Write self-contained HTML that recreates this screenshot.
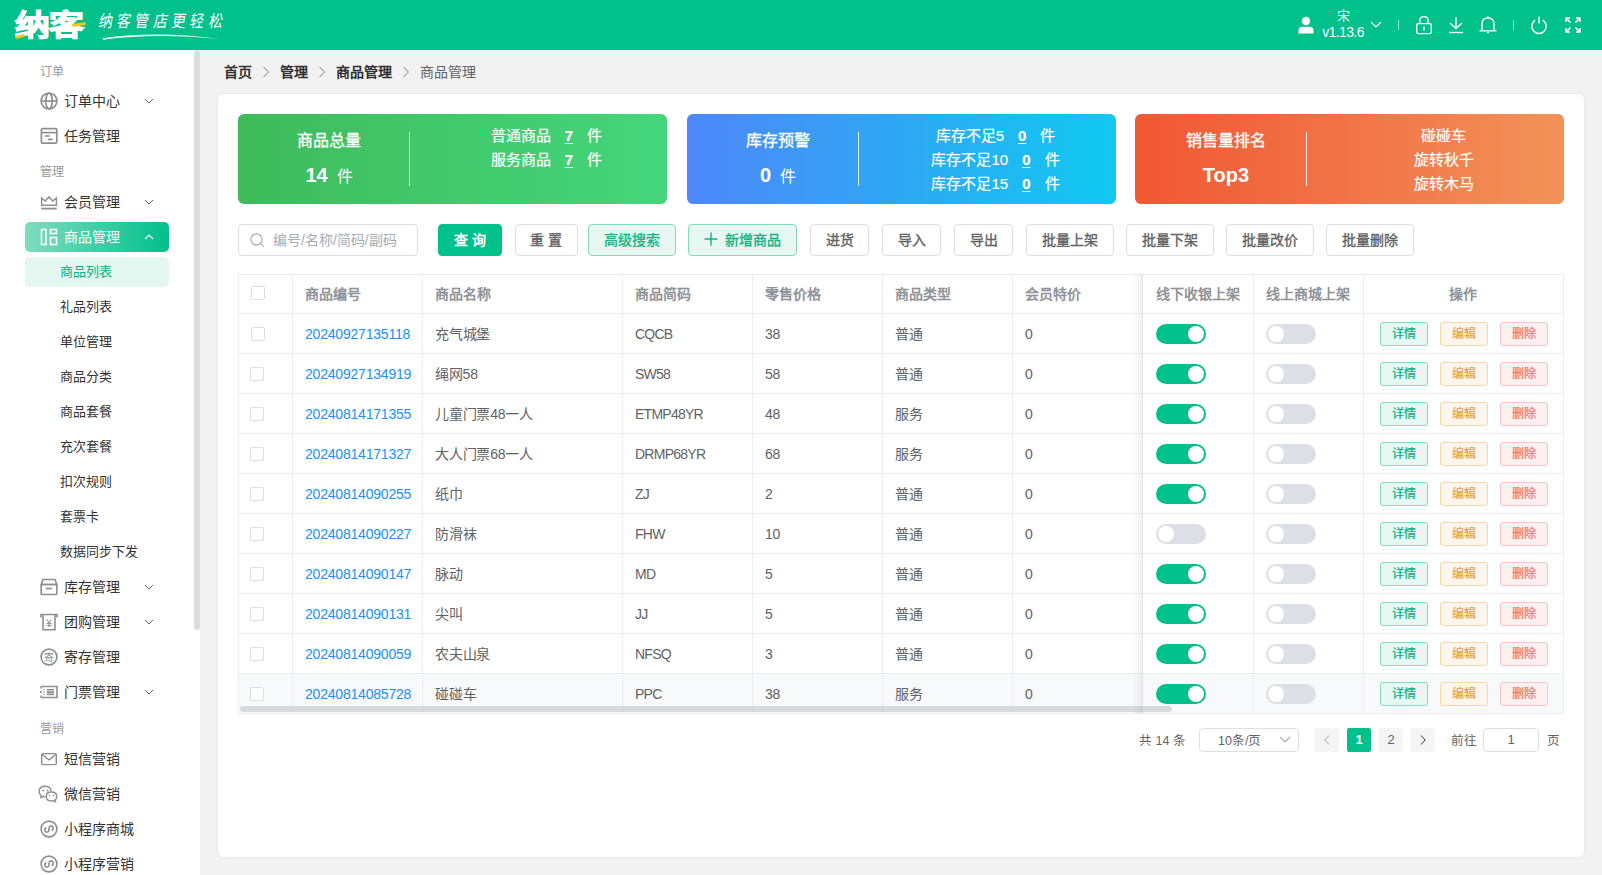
<!DOCTYPE html>
<html lang="zh-CN">
<head>
<meta charset="utf-8">
<style>
*{box-sizing:border-box;margin:0;padding:0}
html,body{width:1602px;height:875px;overflow:hidden;background:#f2f2f2;font-family:"Liberation Sans",sans-serif;color:#303133}
.abs{position:absolute}
#hdr{position:absolute;left:0;top:0;width:1602px;height:50px;background:#00c08b}
#side{position:absolute;left:0;top:50px;width:200px;height:825px;background:#fff;overflow:hidden}
#sbthumb{position:absolute;left:194px;top:50px;width:6px;height:580px;background:#dcdde0;border-radius:3px}
#card{position:absolute;left:218px;top:94px;width:1366px;height:763px;background:#fff;border-radius:6px;box-shadow:0 0 4px rgba(0,0,0,.06)}
.slab{left:40px;font-size:12px;line-height:20px;color:#999}
.sitem{left:64px;font-size:14px;line-height:20px;color:#333}
.sitem.act{color:#fff}
.ssub{left:60px;font-size:13px;line-height:20px;color:#333}
.ssub.act{color:#00b37f}
.sico{width:18px;height:18px;line-height:0}
.bc{font-size:14px;line-height:20px;font-weight:700;color:#303133;white-space:nowrap}
.scard{top:114px;width:429px;height:90px;border-radius:6px}
.stitle{top:131px;width:120px;text-align:center;font-size:16px;line-height:20px;color:#fff;white-space:nowrap;-webkit-text-stroke:.3px #fff}
.snum{top:165px;width:120px;text-align:center;font-size:16px;line-height:20px;color:#fff;white-space:nowrap}
.snum b{font-size:20px;font-weight:700}
.srow{width:300px;text-align:center;font-size:15px;line-height:24px;color:#fff;white-space:nowrap;-webkit-text-stroke:.2px #fff}
.srow u{font-weight:700;margin:0 14px;text-underline-offset:2px}
.inp{border:1px solid #dcdfe6;border-radius:4px;background:#fff}
.sl{display:inline-block;padding:0}
.btn{top:224px;height:32px;border:1px solid #dcdfe6;border-radius:4px;text-align:center;font-size:14px;line-height:30px;font-weight:500;color:#606266;background:#fff;white-space:nowrap}
.btn.pri{background:#00c08b;border-color:#00c08b;color:#fff;font-weight:700}
.btn.def{font-weight:400;-webkit-text-stroke:.35px #606266}
.btn.grn{background:#e6f8f1;border-color:#80dcbc;color:#12b383;font-weight:400;-webkit-text-stroke:.35px #12b383}
.plus{font-weight:400;font-size:20px;margin-right:6px;position:relative;top:1px}
.cb{width:14px;height:14px;border:1px solid #dcdfe6;border-radius:2px;background:#fff}
.th{font-size:14px;line-height:20px;font-weight:700;color:#909399;white-space:nowrap}
.td{font-size:14px;line-height:20px;color:#606266;white-space:nowrap;letter-spacing:-.2px}
.lnk{color:#1890ff}
.sw{width:50px;height:20px;border-radius:10px;background:#dcdfe6}
.sw i{position:absolute;left:2px;top:2px;width:16px;height:16px;border-radius:50%;background:#fff}
.sw.on{background:#00c08b}
.sw.on i{left:32px}
.ab{width:48px;height:24px;border:1px solid;border-radius:3px;font-size:12px;line-height:22px;text-align:center;-webkit-text-stroke:.2px currentColor}
.ab1{background:#e6f8f1;border-color:#80dcbc;color:#00b37f}
.ab2{background:#fdf6ec;border-color:#f5d7a8;color:#e6a23c}
.ab3{background:#fef0f0;border-color:#fbc4c4;color:#f56c6c}
.pg{font-size:12.5px;line-height:20px;color:#606266;white-space:nowrap}
.pb{top:728px;width:24px;height:24px;border-radius:2px;background:#f4f4f5;text-align:center;font-size:13px;line-height:24px;color:#606266;font-weight:400}
.pb svg{margin-top:6px}
.pb.act{background:#00c08b;color:#fff;font-weight:700}
</style>
</head>
<body>
<div id="hdr">
 <div class="abs" style="left:15px;top:6px;font-size:29px;font-weight:900;color:#fff;letter-spacing:-1px;line-height:40px;-webkit-text-stroke:1.2px #fff;white-space:nowrap;transform:scaleX(1.2);transform-origin:0 0">纳客</div>
 <div class="abs" style="left:15px;top:35px;width:10px;height:3px;background:#f5c518;border-radius:2px;transform:rotate(-15deg)"></div>
 <div class="abs" style="left:72px;top:23px;width:14px;height:3px;background:#f5c518;border-radius:2px;transform:rotate(-8deg)"></div>
 <div class="abs" style="left:101px;top:9px;font-size:14px;color:#fff;font-family:'Liberation Serif',serif;font-weight:200;letter-spacing:4.3px;line-height:22px;white-space:nowrap;transform:skewX(-10deg) scaleY(1.2);transform-origin:0 0">纳客管店更轻松</div>
 <svg class="abs" style="left:100px;top:30px" width="125" height="12" viewBox="0 0 125 12"><path d="M2.5 8.2 Q55 0.5 120 9 Q55 2.8 3.5 9.8 Z" fill="#fff" opacity=".92"/></svg>
 <svg class="abs" style="left:1298px;top:16px" width="16" height="18" viewBox="0 0 16 18"><circle cx="8" cy="5" r="4.2" fill="#fff"/><path d="M0.5 17.5 V14.5 Q0.5 10.8 4.5 10.8 H11.5 Q15.5 10.8 15.5 14.5 V17.5 Z" fill="#fff"/></svg>
 <div class="abs" style="left:1321px;top:7px;width:44px;text-align:center;color:#fff;font-size:13px;line-height:17px">宋</div>
 <div class="abs" style="left:1318px;top:24px;width:50px;text-align:center;color:#fff;font-size:14px;line-height:17px;letter-spacing:-.6px">v1.13.6</div>
 <svg class="abs" style="left:1370px;top:20px" width="12" height="9"><path d="M1 2 L6 7 L11 2" stroke="#fff" stroke-width="1.2" fill="none"/></svg>
 <div class="abs" style="left:1398px;top:20px;width:1px;height:10px;background:rgba(255,255,255,.6)"></div>
 <svg class="abs" style="left:1415px;top:15px" width="18" height="20" viewBox="0 0 18 20"><rect x="1.7" y="8.6" width="14.6" height="10" rx="1.5" stroke="#fff" stroke-width="1.4" fill="none"/><path d="M4.8 8.6 V5.6 Q4.8 1.6 9 1.6 Q13.2 1.6 13.2 5.6 V8.6" stroke="#fff" stroke-width="1.4" fill="none"/><path d="M9 11.5 V15.5" stroke="#fff" stroke-width="1.4"/></svg>
 <svg class="abs" style="left:1448px;top:16px" width="16" height="18" viewBox="0 0 16 18"><path d="M8 1 V12 M2 7 L8 12.5 L14 7" stroke="#fff" stroke-width="1.4" fill="none"/><path d="M1 16.5 H15" stroke="#fff" stroke-width="1.4"/></svg>
 <svg class="abs" style="left:1478px;top:15px" width="20" height="20" viewBox="0 0 20 20"><path d="M4 15.5 V9 Q4 3 10 3 Q16 3 16 9 V15.5" stroke="#fff" stroke-width="1.4" fill="none"/><path d="M1.5 15.8 H18.5" stroke="#fff" stroke-width="1.4"/><circle cx="10" cy="2.2" r="1" fill="#fff"/><path d="M9 17.5 H11" stroke="#fff" stroke-width="1.4"/></svg>
 <div class="abs" style="left:1513px;top:20px;width:1px;height:10px;background:rgba(255,255,255,.6)"></div>
 <svg class="abs" style="left:1530px;top:15px" width="18" height="20" viewBox="0 0 18 20"><path d="M5.2 5.2 A7.2 7.2 0 1 0 12.8 5.2" stroke="#fff" stroke-width="1.4" fill="none"/><path d="M9 1.5 V8.5" stroke="#fff" stroke-width="1.4"/></svg>
 <svg class="abs" style="left:1564px;top:16px" width="18" height="18" viewBox="0 0 18 18"><g stroke="#fff" stroke-width="1.5" fill="none"><path d="M2 6 V2 H6 M2 2 L6.5 6.5"/><path d="M16 6 V2 H12 M16 2 L11.5 6.5"/><path d="M2 12 V16 H6 M2 16 L6.5 11.5"/><path d="M16 12 V16 H12 M16 16 L11.5 11.5"/></g></svg>
</div>
<div id="side"></div>
<div class="abs slab" style="top:61.5px">订单</div>
<div class="abs sico" style="left:40px;top:91.5px"><svg width="18" height="18" viewBox="0 0 18 18"><g stroke="#8f8f8f" stroke-width="1.7" fill="none"><circle cx="9" cy="9" r="7.9"/><ellipse cx="9" cy="9" rx="3.2" ry="7.9"/><path d="M1.2 9 H16.8"/></g></svg></div>
<div class="abs sitem" style="top:90.5px">订单中心</div>
<div class="abs" style="left:144px;top:97.5px;width:10px;height:6px;line-height:0"><svg width="10" height="6" viewBox="0 0 10 6"><path d="M1 1 L5 5 L9 1" stroke="#606266" stroke-width="1" fill="none"/></svg></div>
<div class="abs sico" style="left:40px;top:126.5px"><svg width="18" height="18" viewBox="0 0 18 18"><g stroke="#8f8f8f" stroke-width="1.7" fill="none"><rect x="1.4" y="1.6" width="15.4" height="14.6" rx="1.2"/><path d="M1.4 5.6 H16.8"/><path d="M4.8 9 H9.8 M7.8 12.3 H12.8"/></g></svg></div>
<div class="abs sitem" style="top:125.5px">任务管理</div>
<div class="abs slab" style="top:161.5px">管理</div>
<div class="abs sico" style="left:40px;top:192.5px"><svg width="18" height="18" viewBox="0 0 18 18"><g stroke="#8f8f8f" stroke-width="1.7" fill="none"><path d="M1.6 12.3 V5 L5.2 8 L9 3.9 L12.8 8 L16.4 5 V12.3 Z" stroke-width="1.4"/><path d="M1.3 15.6 H16.7" stroke-width="1.8"/></g></svg></div>
<div class="abs sitem" style="top:191.5px">会员管理</div>
<div class="abs" style="left:144px;top:198.5px;width:10px;height:6px;line-height:0"><svg width="10" height="6" viewBox="0 0 10 6"><path d="M1 1 L5 5 L9 1" stroke="#606266" stroke-width="1" fill="none"/></svg></div>
<div class="abs" style="left:25px;top:222px;width:144px;height:30px;border-radius:5px;background:linear-gradient(90deg,#80dcbf 0%,#00c08b 100%)"></div>
<div class="abs sico" style="left:40px;top:228px"><svg width="18" height="18" viewBox="0 0 18 18"><g stroke="#fff" stroke-width="1.6" fill="none"><rect x="1.5" y="1.5" width="4.5" height="15"/><rect x="10.5" y="1.5" width="6" height="4"/><rect x="10.5" y="9.5" width="6" height="7"/></g></svg></div>
<div class="abs sitem act" style="top:227px">商品管理</div>
<div class="abs" style="left:144px;top:234px;width:10px;height:6px;line-height:0"><svg width="10" height="6" viewBox="0 0 10 6"><path d="M1 5 L5 1 L9 5" stroke="#fff" stroke-width="1.1" fill="none"/></svg></div>
<div class="abs" style="left:25px;top:257px;width:144px;height:30px;border-radius:5px;background:#e3f7f0"></div>
<div class="abs ssub act" style="top:262px">商品列表</div>
<div class="abs ssub" style="top:297px">礼品列表</div>
<div class="abs ssub" style="top:332px">单位管理</div>
<div class="abs ssub" style="top:367px">商品分类</div>
<div class="abs ssub" style="top:402px">商品套餐</div>
<div class="abs ssub" style="top:437px">充次套餐</div>
<div class="abs ssub" style="top:472px">扣次规则</div>
<div class="abs ssub" style="top:507px">套票卡</div>
<div class="abs ssub" style="top:542px">数据同步下发</div>
<div class="abs sico" style="left:40px;top:578px"><svg width="18" height="18" viewBox="0 0 18 18"><g stroke="#8f8f8f" stroke-width="1.7" fill="none"><path d="M1.2 6.5 L3 1.5 H15 L16.8 6.5 Z"/><rect x="1.2" y="6.5" width="15.6" height="10" rx="1"/><path d="M6 10.5 H12"/></g></svg></div>
<div class="abs sitem" style="top:577px">库存管理</div>
<div class="abs" style="left:144px;top:584px;width:10px;height:6px;line-height:0"><svg width="10" height="6" viewBox="0 0 10 6"><path d="M1 1 L5 5 L9 1" stroke="#606266" stroke-width="1" fill="none"/></svg></div>
<div class="abs sico" style="left:40px;top:613px"><svg width="18" height="18" viewBox="0 0 18 18"><g stroke="#8f8f8f" stroke-width="1.6" fill="none"><path d="M1 4.5 V1.5 H17 V4.5"/><path d="M3 2 V16.8 H15 V2"/><path d="M6.5 6.5 L9 9.5 L11.5 6.5 M9 9.5 V14 M6.5 10.5 H11.5 M6.5 12.5 H11.5" stroke-width="1.1"/></g></svg></div>
<div class="abs sitem" style="top:612px">团购管理</div>
<div class="abs" style="left:144px;top:619px;width:10px;height:6px;line-height:0"><svg width="10" height="6" viewBox="0 0 10 6"><path d="M1 1 L5 5 L9 1" stroke="#606266" stroke-width="1" fill="none"/></svg></div>
<div class="abs sico" style="left:40px;top:648px"><svg width="18" height="18" viewBox="0 0 18 18"><circle cx="9" cy="9" r="7.9" stroke="#8f8f8f" stroke-width="1.7" fill="none"/><text x="9" y="12.6" font-size="10" text-anchor="middle" fill="#8f8f8f" font-family="Liberation Sans,sans-serif">寄</text></svg></div>
<div class="abs sitem" style="top:647px">寄存管理</div>
<div class="abs sico" style="left:40px;top:683px"><svg width="18" height="18" viewBox="0 0 18 18"><g stroke="#8f8f8f" stroke-width="1.6" fill="none"><path d="M1 3.5 H17 V14.5 H1"/><path d="M1 3.5 V5.5 M1 8 V10 M1 12.5 V14.5"/><path d="M4 6.3 V7.3 M4 8.6 V9.6 M4 10.9 V11.9"/><path d="M6.8 6.8 H14 M6.8 9.1 H14 M6.8 11.4 H14"/></g></svg></div>
<div class="abs sitem" style="top:682px">门票管理</div>
<div class="abs" style="left:144px;top:689px;width:10px;height:6px;line-height:0"><svg width="10" height="6" viewBox="0 0 10 6"><path d="M1 1 L5 5 L9 1" stroke="#606266" stroke-width="1" fill="none"/></svg></div>
<div class="abs slab" style="top:718.5px">营销</div>
<div class="abs sico" style="left:40px;top:749.5px"><svg width="18" height="18" viewBox="0 0 18 18"><g stroke="#8f8f8f" stroke-width="1.4" fill="none"><rect x="1.7" y="3.6" width="14.6" height="11" rx="1"/><path d="M2.2 4.5 L9 9.8 L15.8 4.5"/></g></svg></div>
<div class="abs sitem" style="top:748.5px">短信营销</div>
<div class="abs sico" style="left:38px;top:784.5px"><svg width="20" height="18" viewBox="0 0 20 18"><g stroke="#8f8f8f" stroke-width="1.4" fill="none"><path d="M13 6 Q12.5 1.5 7.5 1.3 Q1.3 1.3 1 6.5 Q1 9 3.3 10.5 L2.8 12.5 L5.3 11.3 Q6.5 11.7 7.6 11.6"/><path d="M18.8 11.5 Q18.8 7 13.5 7 Q8.2 7 8.2 11.5 Q8.2 16 13.5 16 Q14.6 16 15.5 15.7 L17.5 16.8 L17 15 Q18.8 13.8 18.8 11.5 Z"/></g><g fill="#8f8f8f"><circle cx="5.2" cy="5.5" r=".9"/><circle cx="9.5" cy="5.5" r=".9"/><circle cx="11.5" cy="10.5" r=".8"/><circle cx="15.5" cy="10.5" r=".8"/></g></svg></div>
<div class="abs sitem" style="top:783.5px">微信营销</div>
<div class="abs sico" style="left:40px;top:819.5px"><svg width="18" height="18" viewBox="0 0 18 18"><g stroke="#8f8f8f" stroke-width="1.6" fill="none"><circle cx="9" cy="9" r="7.9"/><path d="M6.2 7.5 Q4.3 8.8 5 10.8 Q6 12.8 8 11.8 Q9 11.2 9 9.5 V8.5 Q9 6.8 10 6.2 Q12 5.2 13 7.2 Q13.7 9.2 11.8 10.5"/></g></svg></div>
<div class="abs sitem" style="top:818.5px">小程序商城</div>
<div class="abs sico" style="left:40px;top:854.5px"><svg width="18" height="18" viewBox="0 0 18 18"><g stroke="#8f8f8f" stroke-width="1.6" fill="none"><circle cx="9" cy="9" r="7.9"/><path d="M6.2 7.5 Q4.3 8.8 5 10.8 Q6 12.8 8 11.8 Q9 11.2 9 9.5 V8.5 Q9 6.8 10 6.2 Q12 5.2 13 7.2 Q13.7 9.2 11.8 10.5"/></g></svg></div>
<div class="abs sitem" style="top:853.5px">小程序营销</div>
<div id="sbthumb"></div>
<div id="card"></div>
<div class="abs bc" style="left:224px;top:62px">首页</div>
<div class="abs" style="left:262px;top:66px;line-height:0"><svg width="8" height="12" viewBox="0 0 8 12"><path d="M1.5 1 L6.5 6 L1.5 11" stroke="#a8abb2" stroke-width="1.1" fill="none"/></svg></div>
<div class="abs bc" style="left:280px;top:62px">管理</div>
<div class="abs" style="left:318px;top:66px;line-height:0"><svg width="8" height="12" viewBox="0 0 8 12"><path d="M1.5 1 L6.5 6 L1.5 11" stroke="#a8abb2" stroke-width="1.1" fill="none"/></svg></div>
<div class="abs bc" style="left:336px;top:62px">商品管理</div>
<div class="abs" style="left:402px;top:66px;line-height:0"><svg width="8" height="12" viewBox="0 0 8 12"><path d="M1.5 1 L6.5 6 L1.5 11" stroke="#a8abb2" stroke-width="1.1" fill="none"/></svg></div>
<div class="abs bc" style="left:420px;top:62px;font-weight:400;color:#606266">商品管理</div>
<div class="abs scard" style="left:238px;background:linear-gradient(90deg,#3fbb5b,#45d67d)"></div>
<div class="abs stitle" style="left:269px">商品总量</div>
<div class="abs snum" style="left:269px"><b>14</b>&nbsp; 件</div>
<div class="abs" style="left:409px;top:132px;width:1px;height:54px;background:rgba(255,255,255,.85)"></div>
<div class="abs srow" style="left:396.5px;top:123.5px">普通商品<u>7</u>件</div>
<div class="abs srow" style="left:396.5px;top:147.5px">服务商品<u>7</u>件</div>
<div class="abs scard" style="left:687px;background:linear-gradient(90deg,#4e87f8,#10c9ef)"></div>
<div class="abs stitle" style="left:718px">库存预警</div>
<div class="abs snum" style="left:718px"><b>0</b>&nbsp; 件</div>
<div class="abs" style="left:858px;top:132px;width:1px;height:54px;background:rgba(255,255,255,.85)"></div>
<div class="abs srow" style="left:845.5px;top:123.5px">库存不足5<u>0</u>件</div>
<div class="abs srow" style="left:845.5px;top:147.5px">库存不足10<u>0</u>件</div>
<div class="abs srow" style="left:845.5px;top:171.5px">库存不足15<u>0</u>件</div>
<div class="abs scard" style="left:1135px;background:linear-gradient(90deg,#f15733,#f19259)"></div>
<div class="abs stitle" style="left:1166px">销售量排名</div>
<div class="abs snum" style="left:1166px"><b>Top3</b></div>
<div class="abs" style="left:1306px;top:132px;width:1px;height:54px;background:rgba(255,255,255,.85)"></div>
<div class="abs srow" style="left:1293.5px;top:123.5px">碰碰车</div>
<div class="abs srow" style="left:1293.5px;top:147.5px">旋转秋千</div>
<div class="abs srow" style="left:1293.5px;top:171.5px">旋转木马</div>
<div class="abs inp" style="left:238px;top:224px;width:180px;height:32px"></div>
<svg class="abs" style="left:250px;top:233px" width="15" height="15" viewBox="0 0 15 15"><circle cx="6.5" cy="6.5" r="5.6" stroke="#a8abb2" stroke-width="1.2" fill="none"/><path d="M10.6 10.6 L13.8 13.8" stroke="#a8abb2" stroke-width="1.2"/></svg>
<div class="abs" style="left:273px;top:230px;font-size:14px;line-height:20px;color:#a8abb2;white-space:nowrap">编号<span class="sl">/</span>名称<span class="sl">/</span>简码<span class="sl">/</span>副码</div>
<div class="abs btn pri" style="left:438px;width:64px">查 询</div>
<div class="abs btn def" style="left:514.5px;width:63px">重 置</div>
<div class="abs btn grn" style="left:588px;width:88px">高级搜索</div>
<div class="abs btn grn" style="left:688px;width:109px"><svg width="14" height="14" viewBox="0 0 14 14" style="vertical-align:-1px;margin-right:7px"><path d="M7 .5 V13.5 M.5 7 H13.5" stroke="#12b383" stroke-width="1.4"/></svg>新增商品</div>
<div class="abs btn def" style="left:810px;width:59px">进货</div>
<div class="abs btn def" style="left:882px;width:59px">导入</div>
<div class="abs btn def" style="left:954px;width:59px">导出</div>
<div class="abs btn def" style="left:1026px;width:88px">批量上架</div>
<div class="abs btn def" style="left:1126px;width:88px">批量下架</div>
<div class="abs btn def" style="left:1226px;width:88px">批量改价</div>
<div class="abs btn def" style="left:1326px;width:88px">批量删除</div>
<div class="abs" style="left:239px;top:674px;width:1324px;height:39px;background:#f8f9fb"></div>
<div class="abs" style="left:238px;top:274px;width:1326px;height:1px;background:#ebeef5"></div>
<div class="abs" style="left:238px;top:313px;width:1326px;height:1px;background:#ebeef5"></div>
<div class="abs" style="left:238px;top:353px;width:1326px;height:1px;background:#ebeef5"></div>
<div class="abs" style="left:238px;top:393px;width:1326px;height:1px;background:#ebeef5"></div>
<div class="abs" style="left:238px;top:433px;width:1326px;height:1px;background:#ebeef5"></div>
<div class="abs" style="left:238px;top:473px;width:1326px;height:1px;background:#ebeef5"></div>
<div class="abs" style="left:238px;top:513px;width:1326px;height:1px;background:#ebeef5"></div>
<div class="abs" style="left:238px;top:553px;width:1326px;height:1px;background:#ebeef5"></div>
<div class="abs" style="left:238px;top:593px;width:1326px;height:1px;background:#ebeef5"></div>
<div class="abs" style="left:238px;top:633px;width:1326px;height:1px;background:#ebeef5"></div>
<div class="abs" style="left:238px;top:673px;width:1326px;height:1px;background:#ebeef5"></div>
<div class="abs" style="left:238px;top:713px;width:1326px;height:1px;background:#ebeef5"></div>
<div class="abs" style="left:238px;top:274px;width:1px;height:440px;background:#ebeef5"></div>
<div class="abs" style="left:292px;top:274px;width:1px;height:440px;background:#ebeef5"></div>
<div class="abs" style="left:422px;top:274px;width:1px;height:440px;background:#ebeef5"></div>
<div class="abs" style="left:622px;top:274px;width:1px;height:440px;background:#ebeef5"></div>
<div class="abs" style="left:752px;top:274px;width:1px;height:440px;background:#ebeef5"></div>
<div class="abs" style="left:882px;top:274px;width:1px;height:440px;background:#ebeef5"></div>
<div class="abs" style="left:1012px;top:274px;width:1px;height:440px;background:#ebeef5"></div>
<div class="abs" style="left:1253px;top:274px;width:1px;height:440px;background:#ebeef5"></div>
<div class="abs" style="left:1363px;top:274px;width:1px;height:440px;background:#ebeef5"></div>
<div class="abs" style="left:1563px;top:274px;width:1px;height:440px;background:#ebeef5"></div>
<div class="abs cb" style="left:251px;top:286px"></div>
<div class="abs th" style="left:305px;top:283.5px">商品编号</div>
<div class="abs th" style="left:435px;top:283.5px">商品名称</div>
<div class="abs th" style="left:635px;top:283.5px">商品简码</div>
<div class="abs th" style="left:765px;top:283.5px">零售价格</div>
<div class="abs th" style="left:895px;top:283.5px">商品类型</div>
<div class="abs th" style="left:1025px;top:283.5px">会员特价</div>
<div class="abs th" style="left:1156px;top:283.5px">线下收银上架</div>
<div class="abs th" style="left:1266px;top:283.5px">线上商城上架</div>
<div class="abs th" style="left:1363px;width:200px;text-align:center;top:283.5px">操作</div>
<div class="abs cb" style="left:251px;top:326.5px"></div>
<div class="abs td lnk" style="left:305px;top:323.5px">20240927135118</div>
<div class="abs td" style="left:435px;top:323.5px">充气城堡</div>
<div class="abs td" style="left:635px;top:323.5px;letter-spacing:-.75px">CQCB</div>
<div class="abs td" style="left:765px;top:323.5px">38</div>
<div class="abs td" style="left:895px;top:323.5px">普通</div>
<div class="abs td" style="left:1025px;top:323.5px">0</div>
<div class="abs sw on" style="left:1156px;top:323.5px"><i></i></div>
<div class="abs sw" style="left:1266px;top:323.5px"><i></i></div>
<div class="abs ab ab1" style="left:1380px;top:321.5px">详情</div>
<div class="abs ab ab2" style="left:1440px;top:321.5px">编辑</div>
<div class="abs ab ab3" style="left:1500px;top:321.5px">删除</div>
<div class="abs cb" style="left:250px;top:366.5px"></div>
<div class="abs td lnk" style="left:305px;top:363.5px">20240927134919</div>
<div class="abs td" style="left:435px;top:363.5px">绳网58</div>
<div class="abs td" style="left:635px;top:363.5px;letter-spacing:-.75px">SW58</div>
<div class="abs td" style="left:765px;top:363.5px">58</div>
<div class="abs td" style="left:895px;top:363.5px">普通</div>
<div class="abs td" style="left:1025px;top:363.5px">0</div>
<div class="abs sw on" style="left:1156px;top:363.5px"><i></i></div>
<div class="abs sw" style="left:1266px;top:363.5px"><i></i></div>
<div class="abs ab ab1" style="left:1380px;top:361.5px">详情</div>
<div class="abs ab ab2" style="left:1440px;top:361.5px">编辑</div>
<div class="abs ab ab3" style="left:1500px;top:361.5px">删除</div>
<div class="abs cb" style="left:250px;top:406.5px"></div>
<div class="abs td lnk" style="left:305px;top:403.5px">20240814171355</div>
<div class="abs td" style="left:435px;top:403.5px">儿童门票48一人</div>
<div class="abs td" style="left:635px;top:403.5px;letter-spacing:-.75px">ETMP48YR</div>
<div class="abs td" style="left:765px;top:403.5px">48</div>
<div class="abs td" style="left:895px;top:403.5px">服务</div>
<div class="abs td" style="left:1025px;top:403.5px">0</div>
<div class="abs sw on" style="left:1156px;top:403.5px"><i></i></div>
<div class="abs sw" style="left:1266px;top:403.5px"><i></i></div>
<div class="abs ab ab1" style="left:1380px;top:401.5px">详情</div>
<div class="abs ab ab2" style="left:1440px;top:401.5px">编辑</div>
<div class="abs ab ab3" style="left:1500px;top:401.5px">删除</div>
<div class="abs cb" style="left:250px;top:446.5px"></div>
<div class="abs td lnk" style="left:305px;top:443.5px">20240814171327</div>
<div class="abs td" style="left:435px;top:443.5px">大人门票68一人</div>
<div class="abs td" style="left:635px;top:443.5px;letter-spacing:-.75px">DRMP68YR</div>
<div class="abs td" style="left:765px;top:443.5px">68</div>
<div class="abs td" style="left:895px;top:443.5px">服务</div>
<div class="abs td" style="left:1025px;top:443.5px">0</div>
<div class="abs sw on" style="left:1156px;top:443.5px"><i></i></div>
<div class="abs sw" style="left:1266px;top:443.5px"><i></i></div>
<div class="abs ab ab1" style="left:1380px;top:441.5px">详情</div>
<div class="abs ab ab2" style="left:1440px;top:441.5px">编辑</div>
<div class="abs ab ab3" style="left:1500px;top:441.5px">删除</div>
<div class="abs cb" style="left:250px;top:486.5px"></div>
<div class="abs td lnk" style="left:305px;top:483.5px">20240814090255</div>
<div class="abs td" style="left:435px;top:483.5px">纸巾</div>
<div class="abs td" style="left:635px;top:483.5px;letter-spacing:-.75px">ZJ</div>
<div class="abs td" style="left:765px;top:483.5px">2</div>
<div class="abs td" style="left:895px;top:483.5px">普通</div>
<div class="abs td" style="left:1025px;top:483.5px">0</div>
<div class="abs sw on" style="left:1156px;top:483.5px"><i></i></div>
<div class="abs sw" style="left:1266px;top:483.5px"><i></i></div>
<div class="abs ab ab1" style="left:1380px;top:481.5px">详情</div>
<div class="abs ab ab2" style="left:1440px;top:481.5px">编辑</div>
<div class="abs ab ab3" style="left:1500px;top:481.5px">删除</div>
<div class="abs cb" style="left:250px;top:526.5px"></div>
<div class="abs td lnk" style="left:305px;top:523.5px">20240814090227</div>
<div class="abs td" style="left:435px;top:523.5px">防滑袜</div>
<div class="abs td" style="left:635px;top:523.5px;letter-spacing:-.75px">FHW</div>
<div class="abs td" style="left:765px;top:523.5px">10</div>
<div class="abs td" style="left:895px;top:523.5px">普通</div>
<div class="abs td" style="left:1025px;top:523.5px">0</div>
<div class="abs sw " style="left:1156px;top:523.5px"><i></i></div>
<div class="abs sw" style="left:1266px;top:523.5px"><i></i></div>
<div class="abs ab ab1" style="left:1380px;top:521.5px">详情</div>
<div class="abs ab ab2" style="left:1440px;top:521.5px">编辑</div>
<div class="abs ab ab3" style="left:1500px;top:521.5px">删除</div>
<div class="abs cb" style="left:250px;top:566.5px"></div>
<div class="abs td lnk" style="left:305px;top:563.5px">20240814090147</div>
<div class="abs td" style="left:435px;top:563.5px">脉动</div>
<div class="abs td" style="left:635px;top:563.5px;letter-spacing:-.75px">MD</div>
<div class="abs td" style="left:765px;top:563.5px">5</div>
<div class="abs td" style="left:895px;top:563.5px">普通</div>
<div class="abs td" style="left:1025px;top:563.5px">0</div>
<div class="abs sw on" style="left:1156px;top:563.5px"><i></i></div>
<div class="abs sw" style="left:1266px;top:563.5px"><i></i></div>
<div class="abs ab ab1" style="left:1380px;top:561.5px">详情</div>
<div class="abs ab ab2" style="left:1440px;top:561.5px">编辑</div>
<div class="abs ab ab3" style="left:1500px;top:561.5px">删除</div>
<div class="abs cb" style="left:250px;top:606.5px"></div>
<div class="abs td lnk" style="left:305px;top:603.5px">20240814090131</div>
<div class="abs td" style="left:435px;top:603.5px">尖叫</div>
<div class="abs td" style="left:635px;top:603.5px;letter-spacing:-.75px">JJ</div>
<div class="abs td" style="left:765px;top:603.5px">5</div>
<div class="abs td" style="left:895px;top:603.5px">普通</div>
<div class="abs td" style="left:1025px;top:603.5px">0</div>
<div class="abs sw on" style="left:1156px;top:603.5px"><i></i></div>
<div class="abs sw" style="left:1266px;top:603.5px"><i></i></div>
<div class="abs ab ab1" style="left:1380px;top:601.5px">详情</div>
<div class="abs ab ab2" style="left:1440px;top:601.5px">编辑</div>
<div class="abs ab ab3" style="left:1500px;top:601.5px">删除</div>
<div class="abs cb" style="left:250px;top:646.5px"></div>
<div class="abs td lnk" style="left:305px;top:643.5px">20240814090059</div>
<div class="abs td" style="left:435px;top:643.5px">农夫山泉</div>
<div class="abs td" style="left:635px;top:643.5px;letter-spacing:-.75px">NFSQ</div>
<div class="abs td" style="left:765px;top:643.5px">3</div>
<div class="abs td" style="left:895px;top:643.5px">普通</div>
<div class="abs td" style="left:1025px;top:643.5px">0</div>
<div class="abs sw on" style="left:1156px;top:643.5px"><i></i></div>
<div class="abs sw" style="left:1266px;top:643.5px"><i></i></div>
<div class="abs ab ab1" style="left:1380px;top:641.5px">详情</div>
<div class="abs ab ab2" style="left:1440px;top:641.5px">编辑</div>
<div class="abs ab ab3" style="left:1500px;top:641.5px">删除</div>
<div class="abs cb" style="left:250px;top:686.5px"></div>
<div class="abs td lnk" style="left:305px;top:683.5px">20240814085728</div>
<div class="abs td" style="left:435px;top:683.5px">碰碰车</div>
<div class="abs td" style="left:635px;top:683.5px;letter-spacing:-.75px">PPC</div>
<div class="abs td" style="left:765px;top:683.5px">38</div>
<div class="abs td" style="left:895px;top:683.5px">服务</div>
<div class="abs td" style="left:1025px;top:683.5px">0</div>
<div class="abs sw on" style="left:1156px;top:683.5px"><i></i></div>
<div class="abs sw" style="left:1266px;top:683.5px"><i></i></div>
<div class="abs ab ab1" style="left:1380px;top:681.5px">详情</div>
<div class="abs ab ab2" style="left:1440px;top:681.5px">编辑</div>
<div class="abs ab ab3" style="left:1500px;top:681.5px">删除</div>
<div class="abs" style="left:1132px;top:274px;width:10px;height:440px;background:linear-gradient(90deg,rgba(0,0,0,0),rgba(0,0,0,.06))"></div>
<div class="abs" style="left:1142px;top:274px;width:1px;height:440px;background:#dfe1e6"></div>
<div class="abs" style="left:240px;top:706px;width:932px;height:6px;border-radius:3px;background:rgba(144,147,153,.3)"></div>
<div class="abs pg" style="left:1139px;top:731px">共 14 条</div>
<div class="abs inp" style="left:1199px;top:728px;width:100px;height:24px"></div>
<div class="abs pg" style="left:1218px;top:731px;color:#606266">10条/页</div>
<svg class="abs" style="left:1279px;top:736px" width="12" height="7" viewBox="0 0 12 7"><path d="M1 1 L6 6 L11 1" stroke="#a8abb2" stroke-width="1.1" fill="none"/></svg>
<div class="abs pb" style="left:1315px"><svg width="8" height="12" viewBox="0 0 8 12"><path d="M6 1.5 L1.8 6 L6 10.5" stroke="#c0c4cc" stroke-width="1.2" fill="none"/></svg></div>
<div class="abs pb act" style="left:1347px">1</div>
<div class="abs pb" style="left:1379px">2</div>
<div class="abs pb" style="left:1411px"><svg width="8" height="12" viewBox="0 0 8 12"><path d="M2 1.5 L6.2 6 L2 10.5" stroke="#303133" stroke-width="1" fill="none"/></svg></div>
<div class="abs pg" style="left:1451px;top:731px">前往</div>
<div class="abs inp" style="left:1483px;top:728px;width:56px;height:24px;text-align:center;font-size:13px;line-height:22px;color:#606266">1</div>
<div class="abs pg" style="left:1547px;top:731px">页</div>
</body>
</html>
